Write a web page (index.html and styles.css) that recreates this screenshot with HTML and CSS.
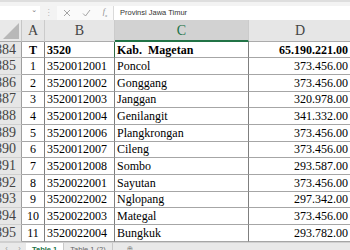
FILE: index.html
```html
<!DOCTYPE html>
<html lang="id">
<head>
    <meta charset="UTF-8">
    <meta name="viewport" content="width=device-width, initial-scale=1.0">
    <title>Table 1</title>
    <link rel="stylesheet" href="styles.css">
</head>
<body>
    <!-- Formula bar -->
    <div class="formula-bar">
        <div class="name-box"><span class="caret">&#8964;</span></div>
        <span class="grip">&#8942;</span>
        <div class="fx-buttons">
            <svg width="8" height="8" viewBox="0 0 8 8"><path d="M1 1 L7 7 M7 1 L1 7" stroke="#9a9a9a" stroke-width="0.9" fill="none"/></svg>
            <svg width="9" height="8" viewBox="0 0 9 8"><path d="M1 4.5 L3.5 7 L8 1" stroke="#9a9a9a" stroke-width="0.9" fill="none"/></svg>
            <span class="fx">f<sub>x</sub></span>
        </div>
        <div class="formula-input">Provinsi Jawa Timur</div>
    </div>

    <div class="sheet" id="sheet">
        <div class="corner">
            <svg width="16" height="16" viewBox="0 0 16 16"><polygon points="16,0 16,16 0,16" fill="#b8b8b8"/></svg>
        </div>
        <div class="col-head">A</div>
        <div class="col-head">B</div>
        <div class="col-head active">C</div>
        <div class="col-head">D</div>
    </div>

    <!-- Sheet tabs -->
    <div class="tabs">
        <span class="tab-nav">&#8249;</span>
        <span class="tab-nav">&#8250;</span>
        <span class="tab current">Table 1</span>
        <span class="tab">Table 1 (2)</span>
        <span class="tab-add">&#8853;</span>
    </div>

    <script>
        var rows = [
            { no: "T", code: "3520", name: "Kab.&nbsp; Magetan", amount: "65.190.221.00" },
            { no: "1", code: "3520012001", name: "Poncol", amount: "373.456.00" },
            { no: "2", code: "3520012002", name: "Gonggang", amount: "373.456.00" },
            { no: "3", code: "3520012003", name: "Janggan", amount: "320.978.00" },
            { no: "4", code: "3520012004", name: "Genilangit", amount: "341.332.00" },
            { no: "5", code: "3520012006", name: "Plangkrongan", amount: "373.456.00" },
            { no: "6", code: "3520012007", name: "Cileng", amount: "373.456.00" },
            { no: "7", code: "3520012008", name: "Sombo", amount: "293.587.00" },
            { no: "8", code: "3520022001", name: "Sayutan", amount: "373.456.00" },
            { no: "9", code: "3520022002", name: "Nglopang", amount: "297.342.00" },
            { no: "10", code: "3520022003", name: "Mategal", amount: "373.456.00" },
            { no: "11", code: "3520022004", name: "Bungkuk", amount: "293.782.00" }
        ];

        var html = '';
        for (let i = 0; i < rows.length; i++) {
            let bold = (i === 0 ? ' bold' : '');
            html += `<div class="row-head">${1884 + i}</div>
                     <div class="cell center${bold}">${rows[i].no}</div>
                     <div class="cell${bold}">${rows[i].code}</div>
                     <div class="cell${bold}${i === 0 ? ' picked' : ''}">${rows[i].name}</div>
                     <div class="cell right${bold}">${rows[i].amount}</div>`;
        }
        document.getElementById('sheet').insertAdjacentHTML('beforeend', html);
    </script>
</body>
</html>
```

FILE: styles.css
```css
body {
    margin: 0;
    width: 350px;
    height: 250px;
    overflow: hidden;
    background-color: #fff;
    font-family: "Liberation Serif", serif;
}

/* Formula bar */
.formula-bar {
    height: 20px;
    box-sizing: border-box;
    display: flex;
    align-items: center;
    gap: 0;
    padding-top: 3px;
    background-color: #f3f3f3;
    border-top: 2px solid #dedede;
}

.name-box {
    width: 40px;
    height: 14px;
    background-color: #fff;
    display: flex;
    justify-content: flex-end;
    align-items: center;
    padding-right: 3px;
    box-sizing: border-box;
}

.caret {
    font-family: "DejaVu Sans", sans-serif;
    font-size: 7px;
    color: #777;
    line-height: 1;
    margin-top: -4px;
}

.grip {
    width: 17px;
    text-align: center;
    font-family: "DejaVu Sans", sans-serif;
    font-size: 8px;
    color: #b5b5b5;
}

.fx-buttons {
    width: 56px;
    height: 14px;
    display: flex;
    align-items: center;
    justify-content: space-around;
    background-color: #fafafa;
}

.fx {
    font-family: "Liberation Serif", serif;
    font-style: italic;
    font-size: 8px;
    color: #888;
}

.fx sub {
    font-size: 5px;
}

.formula-input {
    flex: 1;
    height: 14px;
    background-color: #fff;
    border-left: 1px solid #dadada;
    padding-left: 6px;
    font-family: "Liberation Sans", sans-serif;
    font-size: 7.5px;
    line-height: 14px;
    color: #333;
    white-space: nowrap;
}

/* Grid */
.sheet {
    display: grid;
    grid-template-columns: 22px 23px 70px 134px 103px;
    grid-template-rows: 21.7px;
    grid-auto-rows: 16.67px;
    width: 352px;
}

.corner {
    background-color: #e9e9e9;
    border-right: 1px solid #c6c6c6;
    border-bottom: 1px solid #ababab;
    display: flex;
    justify-content: flex-end;
    align-items: flex-end;
    padding: 0 2px 2px 0;
    box-sizing: border-box;
}

.col-head {
    background-color: #e6e6e6;
    border-right: 1px solid #cbcbcb;
    border-bottom: 1px solid #ababab;
    box-sizing: border-box;
    display: flex;
    justify-content: center;
    align-items: center;
    font-size: 14px;
    color: #444;
    padding-top: 2px;
}

.col-head.active {
    background-color: #d2d2d2;
    color: #217346;
    border-bottom: 2px solid #217346;
}

.row-head {
    background-color: #e6e6e6;
    border-right: 1px solid #9e9e9e;
    border-bottom: 1px solid #cfcfcf;
    box-sizing: border-box;
    display: flex;
    justify-content: flex-end;
    align-items: center;
    padding-right: 5px;
    overflow: hidden;
    font-size: 14px;
    color: #444;
}

.cell {
    border-right: 1px solid #7f7f7f;
    border-bottom: 1px solid #a6a6a6;
    box-sizing: border-box;
    display: flex;
    align-items: center;
    padding: 1px 2px 0 2px;
    font-size: 12px;
    color: #000;
    white-space: nowrap;
    overflow: hidden;
}

.cell.center {
    justify-content: center;
}

.cell.right {
    justify-content: flex-end;
    padding-right: 3px;
}

.cell.bold {
    font-weight: bold;
}

.cell.picked {
    border-left: 1px solid #2f6b45;
    margin-left: -1px;
}

/* Sheet tabs */
.tabs {
    height: 20px;
    box-sizing: border-box;
    display: flex;
    align-items: flex-start;
    background-color: #e9e9e9;
    border-top: 1px solid #d0d0d0;
    font-family: "Liberation Sans", sans-serif;
    font-size: 7.5px;
    color: #666;
}

.tab-nav {
    width: 13px;
    text-align: center;
    color: #999;
    padding-top: 1px;
}

.tab {
    padding: 2px 6px 0 6px;
    height: 20px;
    box-sizing: border-box;
    border-right: 1px solid #c9c9c9;
}

.tab.current {
    background-color: #fff;
    color: #217346;
    font-weight: bold;
}

.tab-add {
    margin-left: 14px;
    padding-top: 1px;
    font-family: "DejaVu Sans", sans-serif;
    color: #888;
}
```
